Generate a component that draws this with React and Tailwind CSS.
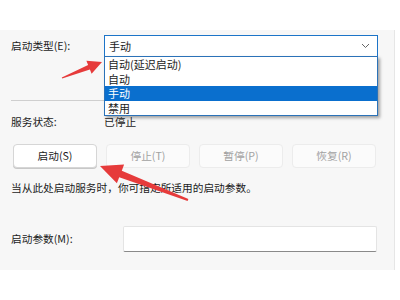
export default function App() {
  const items = ['自动(延迟启动)', '自动', '手动', '禁用'];
  const buttons = [
    { label: '启动(S)', enabled: true },
    { label: '停止(T)', enabled: false },
    { label: '暂停(P)', enabled: false },
    { label: '恢复(R)', enabled: false },
  ];

  return (
    <div
      className="relative w-[400px] h-[300px] bg-white overflow-hidden text-[10.7px] text-[#1b1b1b]"
      style={{ fontFamily: '"Noto Sans CJK SC", "Noto Sans", sans-serif' }}
    >
      <div className="h-[30px]" />
      <div className="flex flex-col h-[240px] w-[395px] bg-[#f7f7f7] border-r border-[#e6e6e6] pl-[11px] pr-[16px]">
        {/* startup type */}
        <div className="mt-[5px] flex items-center h-[22px]">
          <span className="w-[93px] shrink-0">启动类型(E):</span>
          <div className="relative flex-1 h-[22px] bg-white border border-[#1c74c8] flex items-center pl-[4px] pr-[7px]">
            <span className="flex-1 text-[11px]">手动</span>
            <svg width="9" height="6" viewBox="0 0 9 6">
              <path d="M1 1 L4.5 4.5 L8 1" fill="none" stroke="#666" strokeWidth="1" />
            </svg>
            <div className="absolute z-10 top-full left-[-1px] right-[-1px] bg-white border border-[#2b72b8] shadow-[2px_2px_3px_rgba(0,0,0,0.35)]">
              {items.map((item) => (
                <div
                  key={item}
                  className={
                    'h-[14.5px] leading-[14.5px] px-[3px] text-[11px] ' +
                    (item === '手动' ? 'bg-[#0a6fce] text-white' : '')
                  }
                >
                  {item}
                </div>
              ))}
            </div>
          </div>
        </div>

        <div className="mt-[43px] h-px bg-[#cfcfcf]" />

        {/* status */}
        <div className="mt-[13px] flex items-center h-[16px]">
          <span className="w-[93px] shrink-0">服务状态:</span>
          <span>已停止</span>
        </div>

        {/* buttons */}
        <div className="mt-[14px] ml-[2px] grid grid-cols-4 gap-[9px] w-[363px]">
          {buttons.map((b) => (
            <div
              key={b.label}
              className={
                'h-[24px] rounded-[4px] border flex items-center justify-center ' +
                (b.enabled
                  ? 'bg-white border-[#d6d6d6] text-[#1b1b1b] shadow-[0_1px_0_#c8c8c8]'
                  : 'bg-[#fbfbfb] border-[#ececec] text-[#a2a2a2]')
              }
            >
              {b.label}
            </div>
          ))}
        </div>

        <div className="mt-[12px] h-[16px] leading-[16px]">
          当从此处启动服务时，你可指定所适用的启动参数。
        </div>

        {/* params */}
        <div className="mt-[30px] flex items-center h-[26px]">
          <span className="w-[112px] shrink-0">启动参数(M):</span>
          <div className="flex-1 mr-px h-[26px] bg-white border border-[#e4e4e4] border-b-[#8a8a8a] rounded-[2px]" />
        </div>
      </div>

      <svg className="absolute inset-0 z-20 pointer-events-none" width="400" height="300" viewBox="0 0 400 300">
        <polygon
          fill="#e63b3b"
          points="102,62 91.6,73.8 89.9,69.5 62.2,78.5 61.8,77.5 88.1,64.9 86.4,60.7"
        />
        <polygon
          fill="#e63b3b"
          points="100,166 124.1,164.5 121.8,170.7 188.4,199.1 187.6,200.9 119.2,177.2 116.9,183.3"
        />
      </svg>
    </div>
  );
}
